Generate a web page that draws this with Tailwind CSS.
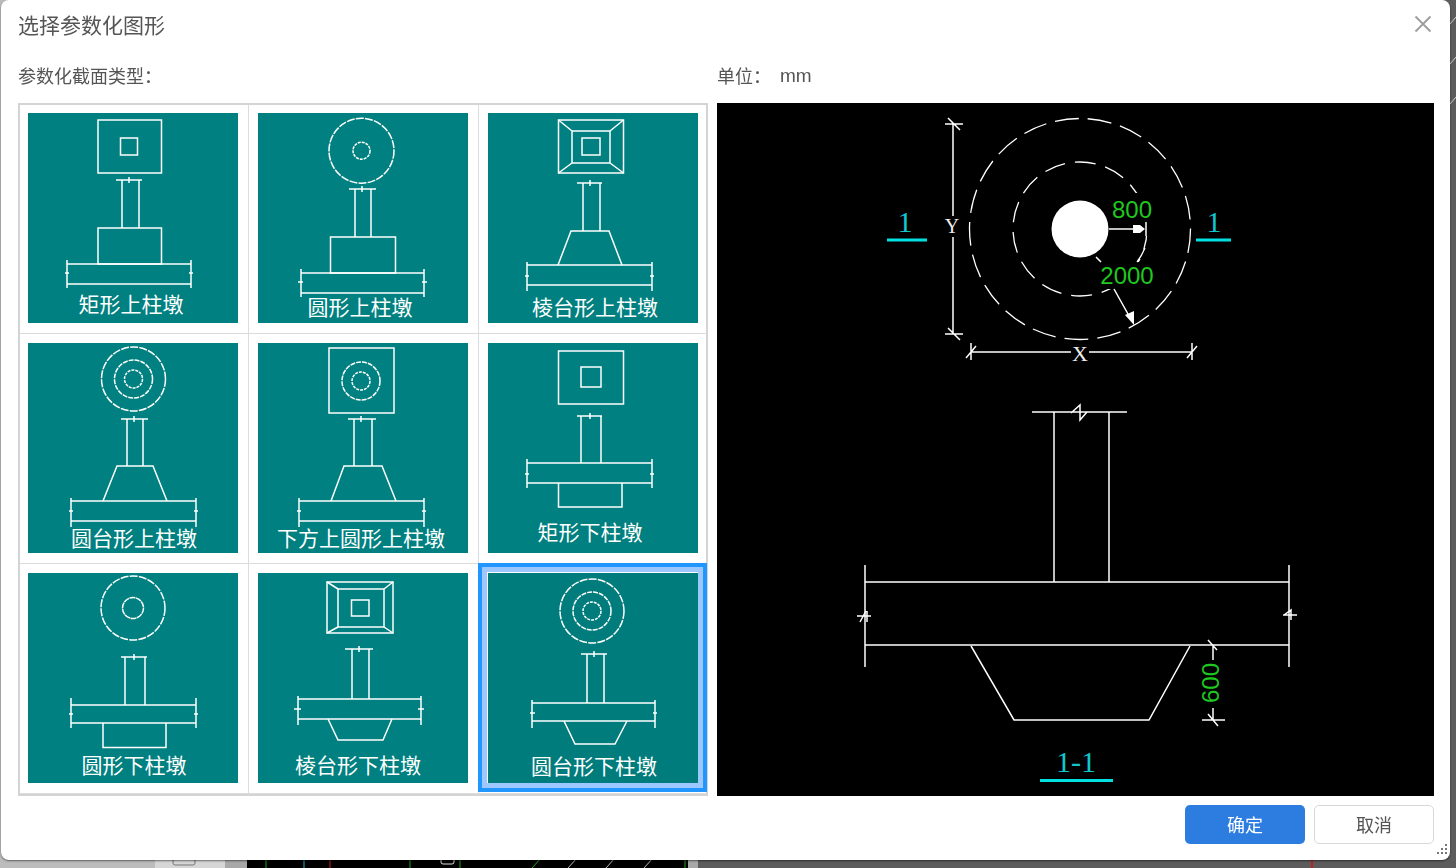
<!DOCTYPE html>
<html lang="zh">
<head>
<meta charset="utf-8">
<title>选择参数化图形</title>
<script src="https://cdn.jsdelivr.net/npm/@tailwindcss/browser@4"></script>
</head>
<body class="relative w-[1456px] h-[868px] overflow-hidden bg-[#5c5c5c] font-['Noto_Sans_CJK_SC','Noto_Sans',sans-serif]">

<!-- desktop behind the dialog -->
<svg class="absolute left-0 top-0" width="1456" height="868" viewBox="0 0 1456 868">
  <rect x="0" y="0" width="155" height="868" fill="#bcbcbc"/>
  <rect x="155" y="840" width="70" height="28" fill="#d6d6d6"/>
  <rect x="173" y="855" width="22" height="10" rx="2" fill="none" stroke="#777" stroke-width="1"/>
  <rect x="225" y="840" width="22" height="28" fill="#a8a8a8"/>
  <rect x="247" y="840" width="443" height="28" fill="#000"/>
  <g stroke-width="1" fill="none">
    <path d="M266 855V868" stroke="#1fa01f"/><path d="M304 855V868" stroke="#20a8b8"/><path d="M330 855V868" stroke="#c02020"/>
    <path d="M410 855V868" stroke="#1fa01f"/><path d="M460 855V868" stroke="#1fa01f"/>
    <path d="M532 868L541 858" stroke="#1fa01f"/>
    <path d="M568 868L577 858M606 868L615 858M644 868L653 858" stroke="#bbb"/>
    <path d="M685 855V868" stroke="#1fa01f"/>
    <path d="M1312 855V868" stroke="#c02020" stroke-width="2"/>
    <path d="M1450 24L1456 17M1450 64L1456 57M1450 104L1456 97" stroke="#cfcfcf"/>
  </g>
  <rect x="441" y="858" width="13" height="6" rx="2" fill="none" stroke="#ddd"/>
  <rect x="688" y="855" width="10" height="13" fill="#a8a8a8"/>
</svg>

<!-- dialog -->
<div class="absolute left-[1px] top-0 w-[1449px] h-[860px] bg-white rounded-[8px] flex flex-col shadow-[0_1px_2px_rgba(0,0,0,0.5)] blur-[0.35px]">
  <div class="h-[51px] flex items-center justify-between pl-[17px] pr-[18px]">
    <span class="text-[21px] leading-[26px] text-[#555] mt-[-4px]">选择参数化图形</span>
    <svg width="18" height="18" viewBox="0 0 18 18" fill="none" stroke="#a0a0a0" stroke-width="2" class="mt-[-3px]"><path d="M1.5 1.5L16.500 16.500M16.500 1.500L1.500 16.500"/></svg>
  </div>
  <div class="flex gap-[9px] pl-[17px]">
    <div class="w-[690px]">
      <div class="h-[52px] pt-[12px] text-[18px] leading-[24px] text-[#555]">参数化截面类型：</div>
      <div class="grid grid-cols-[229px_230px_227px] grid-rows-[229px_230px_230px] border-2 border-[#d4d4d4] w-[690px] h-[693px]">

        <!-- 1 -->
        <div class="border-r border-b border-[#dcdcdc] pl-[8px] pt-[8px]">
          <svg class="block" width="210" height="210" viewBox="28 113 210 210">
            <rect x="28" y="113" width="210" height="210" fill="#008080"/>
            <g fill="none" stroke="#fff" stroke-width="1.500">
              <rect x="98" y="120" width="63.500" height="53"/><rect x="120.500" y="138" width="17" height="17"/>
              <path d="M122 228V180M139 228V180M116 180H142M129 177V183"/>
              <rect x="98" y="228" width="63.500" height="36"/>
              <path d="M67 264H191M67 284H191M67 260V288M191 260V288M65 273H69M189 273H193"/>
            </g>
            <text x="131" y="312" text-anchor="middle" font-size="21" fill="#fff">矩形上柱墩</text>
          </svg>
        </div>
        <!-- 2 -->
        <div class="border-r border-b border-[#dcdcdc] pl-[9px] pt-[8px]">
          <svg class="block" width="210" height="210" viewBox="258 113 210 210">
            <rect x="258" y="113" width="210" height="210" fill="#008080"/>
            <g fill="none" stroke="#fff" stroke-width="1.500">
              <circle cx="361.500" cy="150.700" r="32.500" stroke-dasharray="8 1.200"/><circle cx="361.500" cy="150.700" r="8.500" stroke-dasharray="3 1"/>
              <path d="M355 237V189M371 237V189M349 189H376M362 186V192"/>
              <rect x="330.500" y="237" width="65" height="36"/>
              <path d="M301 273H424M301 293H424M301 269V297M424 269V297M298 282H303M422 282H427"/>
            </g>
            <text x="360" y="315" text-anchor="middle" font-size="21" fill="#fff">圆形上柱墩</text>
          </svg>
        </div>
        <!-- 3 -->
        <div class="border-b border-[#dcdcdc] pl-[9px] pt-[8px]">
          <svg class="block" width="210" height="210" viewBox="488 113 210 210">
            <rect x="488" y="113" width="210" height="210" fill="#008080"/>
            <g fill="none" stroke="#fff" stroke-width="1.500">
              <rect x="558.500" y="120" width="65" height="53"/><rect x="572" y="131" width="38" height="32"/><rect x="582" y="138" width="18" height="17"/>
              <path d="M558.500 120L572 131M623.500 120L610 131M558.500 173L572 163M623.500 173L610 163"/>
              <path d="M583 231V183M600 231V183M577 183H602M590 180V186"/>
              <path d="M558 265L571 231H609L622 265"/>
              <path d="M527 265H652M527 285H652M527 262V291M652 262V291M525 276H529M650 276H654"/>
            </g>
            <text x="595" y="315" text-anchor="middle" font-size="21" fill="#fff">棱台形上柱墩</text>
          </svg>
        </div>

        <!-- 4 -->
        <div class="border-r border-b border-[#dcdcdc] pl-[8px] pt-[9px]">
          <svg class="block" width="210" height="210" viewBox="28 343 210 210">
            <rect x="28" y="343" width="210" height="210" fill="#008080"/>
            <g fill="none" stroke="#fff" stroke-width="1.500">
              <circle cx="133.500" cy="379" r="32" stroke-dasharray="8 1.200"/><circle cx="133.500" cy="379" r="19" stroke-dasharray="5 1"/><circle cx="133.500" cy="379" r="9" stroke-dasharray="3 1"/>
              <path d="M127 466V419M143 466V419M121 419H148M134 416V422"/>
              <path d="M103 501L117 466H153L167 501"/>
              <path d="M71 501H196M71 521H196M71 498V527M196 498V527M69 511H73M194 511H198"/>
            </g>
            <text x="134" y="546" text-anchor="middle" font-size="21" fill="#fff">圆台形上柱墩</text>
          </svg>
        </div>
        <!-- 5 -->
        <div class="border-r border-b border-[#dcdcdc] pl-[9px] pt-[9px]">
          <svg class="block" width="210" height="210" viewBox="258 343 210 210">
            <rect x="258" y="343" width="210" height="210" fill="#008080"/>
            <g fill="none" stroke="#fff" stroke-width="1.500">
              <rect x="329" y="348" width="65" height="65"/>
              <circle cx="361" cy="381" r="19" stroke-dasharray="5 1"/><circle cx="361" cy="381" r="9" stroke-dasharray="3 1"/>
              <path d="M354 466V419M372 466V419M348 419H376M361 416V422"/>
              <path d="M331 501L344 466H382L396 501"/>
              <path d="M299 501H424M299 521H424M299 498V527M424 498V527M297 511H301M422 511H426"/>
            </g>
            <text x="361" y="546" text-anchor="middle" font-size="21" fill="#fff">下方上圆形上柱墩</text>
          </svg>
        </div>
        <!-- 6 -->
        <div class="border-b border-[#dcdcdc] pl-[9px] pt-[9px]">
          <svg class="block" width="210" height="210" viewBox="488 343 210 210">
            <rect x="488" y="343" width="210" height="210" fill="#008080"/>
            <g fill="none" stroke="#fff" stroke-width="1.500">
              <rect x="558.500" y="351" width="65" height="53"/><rect x="581" y="367" width="20" height="20"/>
              <path d="M581 463V416M601 463V416M577 416H602M590 413V419"/>
              <path d="M527 463H652M527 483H652M527 459V488M652 459V488M525 474H529M650 474H654"/>
              <path d="M558.500 483V507H622V483"/>
            </g>
            <text x="590" y="540" text-anchor="middle" font-size="21" fill="#fff">矩形下柱墩</text>
          </svg>
        </div>

        <!-- 7 -->
        <div class="border-r border-b border-[#dcdcdc] pl-[8px] pt-[9px]">
          <svg class="block" width="210" height="210" viewBox="28 573 210 210">
            <rect x="28" y="573" width="210" height="210" fill="#008080"/>
            <g fill="none" stroke="#fff" stroke-width="1.500">
              <circle cx="133" cy="608" r="32" stroke-dasharray="8 1.200"/><circle cx="133" cy="608" r="10.500" stroke-dasharray="6 0.500"/>
              <path d="M125 705V657M145 705V657M121 657H147M134 654V660"/>
              <path d="M71 705H196M71 723H196M71 698V728M196 698V728M69 714H73M194 714H198"/>
              <path d="M103 723V747.500H166V723"/>
            </g>
            <text x="134" y="773" text-anchor="middle" font-size="21" fill="#fff">圆形下柱墩</text>
          </svg>
        </div>
        <!-- 8 -->
        <div class="border-r border-b border-[#dcdcdc] pl-[9px] pt-[9px]">
          <svg class="block" width="210" height="210" viewBox="258 573 210 210">
            <rect x="258" y="573" width="210" height="210" fill="#008080"/>
            <g fill="none" stroke="#fff" stroke-width="1.500">
              <rect x="327" y="582" width="66" height="51"/><rect x="338" y="589" width="46" height="38"/><rect x="351.500" y="600" width="17.500" height="16"/>
              <path d="M327 582L338 589M393 582L384 589M327 633L338 627M393 633L384 627"/>
              <path d="M352 699V649M369 699V649M345 649H373M359 646V652"/>
              <path d="M298 699H421M298 719H421M298 696V725M421 696V725M294 709H301M418 709H424"/>
              <path d="M328 719L338 740H383L392 719"/>
            </g>
            <text x="358" y="773" text-anchor="middle" font-size="21" fill="#fff">棱台形下柱墩</text>
          </svg>
        </div>
        <!-- 9 selected -->
        <div class="relative border-b border-[#dcdcdc] pl-[9px] pt-[9px]">
          <svg class="block" width="210" height="210" viewBox="488 573 210 210">
            <rect x="488" y="573" width="210" height="210" fill="#007c7c"/>
            <g fill="none" stroke="#fff" stroke-width="1.500">
              <circle cx="592" cy="611" r="32" stroke-dasharray="8 1.200"/><circle cx="592" cy="611" r="19" stroke-dasharray="5 1"/><circle cx="592" cy="611" r="9" stroke-dasharray="3 1"/>
              <path d="M587 703V654M604 703V654M581 654H607M594 651V657"/>
              <path d="M532 703H655M532 721H655M532 700V728M655 700V728M530 713H535M653 713H657"/>
              <path d="M564 721L575 744H615L627 721"/>
            </g>
            <text x="594" y="774" text-anchor="middle" font-size="21" fill="#fff">圆台形下柱墩</text>
          </svg>
          <div class="absolute left-[-1px] top-[-1px] w-[229px] h-[229px] border-[4px] border-[#2196ff]">
            <div class="w-full h-full border-[5px] border-[#9cc8ff]"></div>
          </div>
        </div>
      </div>
    </div>

    <div class="w-[717px]">
      <div class="h-[52px] pt-[12px] flex text-[18px] leading-[24px] text-[#555]"><span class="w-[63px]">单位：</span><span class="font-['Liberation_Sans'] text-[19px] mt-[1px]">mm</span></div>
      <svg class="block" width="717" height="693" viewBox="717 103 717 693">
        <rect x="717" y="103" width="717" height="693" fill="#000"/>
        <g fill="none" stroke="#fff" stroke-width="1.300">
          <circle cx="1080" cy="229" r="110.500" stroke-dasharray="24 9"/>
          <circle cx="1080" cy="229" r="67" stroke-dasharray="21 10"/>
        </g>
        <path d="M1110 193H1150V236H1110ZM1098 262H1156V289H1098Z" fill="#000"/>
        <path d="M1145 248A67 67 0 0 1 1137 262" fill="none" stroke="#fff" stroke-width="1.300"/>
        <g fill="none" stroke="#fff" stroke-width="1.500">
          <path d="M953 124V216M953 237V334M945 124H963M945 334H963M948 118L960 130M948 328L960 340"/>
          <path d="M971 352H1071M1089 352H1192M971 343V360M1192 343V360M966 358L976 346M1187 358L1197 346"/>
          <path d="M1109 229H1134M1146 222V236M1096 257L1101 262M1114 289L1128 314"/>
          <path d="M1054 412V582M1109 412V582M1032 412H1127M1071 413L1080 405V420L1087 412"/>
          <path d="M865 582H1289M865 645H1289M865 565V667M1289 565V667"/>
          <path d="M857 616H871M860 622L866 611M867 611V622M1283 615H1297M1284 615L1291 610V620"/>
          <path d="M971 646L1014 720H1149L1190 646"/>
          <path d="M1213 645V660M1213 708V720M1208 640L1217 650M1202 720H1225M1208 714L1218 726"/>
        </g>
        <circle cx="1080" cy="229" r="28.500" fill="#fff"/>
        <path d="M1133 225L1140 225L1145 229L1140 233L1133 233Z" fill="#fff"/>
        <path d="M1125 315L1134 325L1134 311Z" fill="#fff"/>
        <text x="1132" y="218" text-anchor="middle" font-size="24" font-family="Liberation Sans" fill="#1fc81f">800</text>
        <text x="1127" y="284" text-anchor="middle" font-size="24" font-family="Liberation Sans" fill="#1fc81f">2000</text>
        <text x="0" y="0" transform="translate(1219 683) rotate(-90)" text-anchor="middle" font-size="24" font-family="Liberation Sans" fill="#1fc81f">600</text>
        <text x="952" y="233" text-anchor="middle" font-size="20" font-family="Liberation Serif" fill="#eee">Y</text>
        <text x="1080" y="361" text-anchor="middle" font-size="22" font-family="Liberation Serif" fill="#eee">X</text>
        <text x="905" y="232" text-anchor="middle" font-size="30" font-family="Liberation Serif" fill="#10c8d0">1</text>
        <text x="1214" y="232" text-anchor="middle" font-size="30" font-family="Liberation Serif" fill="#10c8d0">1</text>
        <text x="1076" y="772" text-anchor="middle" font-size="30" font-family="Liberation Serif" fill="#10c8d0">1-1</text>
        <path d="M887 240H927M1196 240H1231M1040 780.500H1113" stroke="#00e0e0" stroke-width="3" fill="none"/>
      </svg>
    </div>
  </div>

  <div class="flex justify-end gap-[9px] pt-[9px] pr-[16px]">
    <button class="w-[120px] h-[39px] rounded-[5px] bg-[#2d7de0] text-white text-[18px]">确定</button>
    <button class="w-[120px] h-[39px] rounded-[5px] border border-[#d8d8d8] bg-white text-[#555] text-[18px]">取消</button>
  </div>

  <svg class="absolute right-[2px] bottom-[4px]" width="12" height="12" viewBox="0 0 12 12" fill="#777">
    <rect x="9" y="0" width="2" height="2"/><rect x="5" y="4" width="2" height="2"/><rect x="9" y="4" width="2" height="2"/>
    <rect x="1" y="8" width="2" height="2"/><rect x="5" y="8" width="2" height="2"/><rect x="9" y="8" width="2" height="2"/>
  </svg>
</div>
</body>
</html>
